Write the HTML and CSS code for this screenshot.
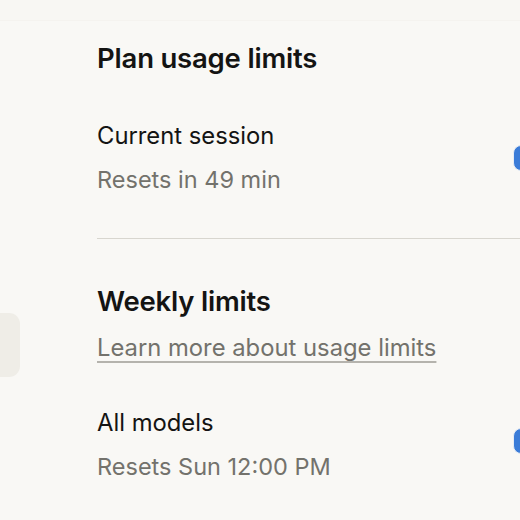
FILE: index.html
```html
<!DOCTYPE html>
<html lang="en">
<head>
<meta charset="utf-8">
<title>Plan usage limits</title>
<link rel="stylesheet" href="styles.css">
</head>
<body>
<div class="topbar"></div>
<div class="page">
  <aside class="sidebar">
    <div class="nav-active"></div>
  </aside>
  <main class="main">
    <h2 class="heading heading-first">Plan usage limits</h2>
    <div class="row row-first">
      <div class="row-text">
        <div class="label">Current session</div>
        <div class="sub">Resets in 49 min</div>
      </div>
      <div class="bar"></div>
    </div>
    <hr class="divider">
    <h2 class="heading">Weekly limits</h2>
    <a class="learn" href="#">Learn more about usage limits</a>
    <div class="row row-second">
      <div class="row-text">
        <div class="label">All models</div>
        <div class="sub">Resets Sun 12:00 PM</div>
      </div>
      <div class="bar bar-raised"></div>
    </div>
  </main>
</div>
</body>
</html>
```
FILE: styles.css
```css
html, body {
  margin: 0;
  padding: 0;
  background: #f9f8f5;
  overflow: hidden;
}
body {
  font-family: Inter, "Noto Sans", sans-serif;
  color: #141413;
  width: 520px;
  height: 520px;
}
.topbar {
  height: 20px;
  background: #f8f7f3;
  border-bottom: 1px solid #f5f3ef;
}
.page {
  display: flex;
}
.sidebar {
  width: 20px;
  flex: none;
  padding-top: 292px;
}
.nav-active {
  height: 64px;
  background: #efede7;
  border-radius: 0 11px 11px 0;
}
.main {
  flex: 1;
  padding-left: 77px;
  min-width: 0;
}
.heading {
  margin: 0;
  font-size: 27.5px;
  font-weight: 600;
  line-height: 36px;
  letter-spacing: -0.2px;
  margin-top: 44px;
}
.heading-first {
  margin-top: 19px;
}
.row {
  display: flex;
  align-items: center;
  justify-content: space-between;
  margin-right: -21px;
}
.row-first {
  margin-top: 44px;
}
.row-second {
  margin-top: 43px;
}
.label {
  font-size: 23.8px;
  line-height: 32px;
}
.sub {
  font-size: 23.5px;
  line-height: 32px;
  color: #73726c;
  margin-top: 12px;
}
.bar {
  width: 26px;
  height: 24px;
  background: #3b7cd8;
  border: 1.5px solid #e6ecf5;
  border-radius: 8px;
  flex: none;
}
.bar-raised {
  margin-bottom: 9px;
}
.divider {
  border: 0;
  height: 1px;
  background: #d8d6cf;
  margin: 42px 0 0 0;
}
.learn {
  display: inline-block;
  margin-top: 13px;
  font-size: 23.8px;
  line-height: 32px;
  color: #73726c;
  text-decoration: underline;
  text-decoration-color: #b5b3ad;
  text-underline-offset: 5px;
  text-decoration-thickness: 1.5px;
}
```
